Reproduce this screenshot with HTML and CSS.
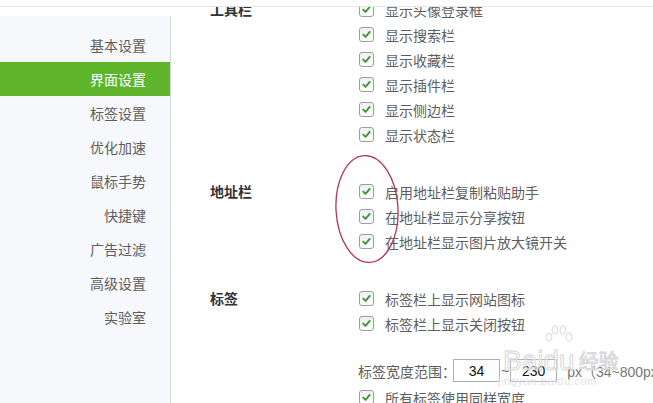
FILE: index.html
```html
<!DOCTYPE html>
<html lang="zh-CN">
<head>
<meta charset="utf-8">
<title>界面设置</title>
<link rel="stylesheet" href="styles.css">
</head>
<body>
<div class="page">
  <div class="topbar"></div>
  <div class="layout">
    <nav class="sidebar">
      <ul class="nav">
        <li class="nav-item">基本设置</li>
        <li class="nav-item active">界面设置</li>
        <li class="nav-item">标签设置</li>
        <li class="nav-item">优化加速</li>
        <li class="nav-item">鼠标手势</li>
        <li class="nav-item">快捷键</li>
        <li class="nav-item">广告过滤</li>
        <li class="nav-item">高级设置</li>
        <li class="nav-item">实验室</li>
      </ul>
    </nav>
    <main class="main">
      <div class="content">
        <section class="group">
          <h3 class="group-title">工具栏</h3>
          <div class="rows">
            <label class="row"><span class="check"><svg viewBox="0 0 15 15"><path d="M3.8 7.6 L6.4 10.2 L11.2 4.6"/></svg></span><span class="text">显示头像登录框</span></label>
            <label class="row"><span class="check"><svg viewBox="0 0 15 15"><path d="M3.8 7.6 L6.4 10.2 L11.2 4.6"/></svg></span><span class="text">显示搜索栏</span></label>
            <label class="row"><span class="check"><svg viewBox="0 0 15 15"><path d="M3.8 7.6 L6.4 10.2 L11.2 4.6"/></svg></span><span class="text">显示收藏栏</span></label>
            <label class="row"><span class="check"><svg viewBox="0 0 15 15"><path d="M3.8 7.6 L6.4 10.2 L11.2 4.6"/></svg></span><span class="text">显示插件栏</span></label>
            <label class="row"><span class="check"><svg viewBox="0 0 15 15"><path d="M3.8 7.6 L6.4 10.2 L11.2 4.6"/></svg></span><span class="text">显示侧边栏</span></label>
            <label class="row"><span class="check"><svg viewBox="0 0 15 15"><path d="M3.8 7.6 L6.4 10.2 L11.2 4.6"/></svg></span><span class="text">显示状态栏</span></label>
          </div>
        </section>
        <section class="group">
          <h3 class="group-title">地址栏</h3>
          <div class="rows">
            <label class="row"><span class="check"><svg viewBox="0 0 15 15"><path d="M3.8 7.6 L6.4 10.2 L11.2 4.6"/></svg></span><span class="text">启用地址栏复制粘贴助手</span></label>
            <label class="row"><span class="check"><svg viewBox="0 0 15 15"><path d="M3.8 7.6 L6.4 10.2 L11.2 4.6"/></svg></span><span class="text">在地址栏显示分享按钮</span></label>
            <label class="row"><span class="check"><svg viewBox="0 0 15 15"><path d="M3.8 7.6 L6.4 10.2 L11.2 4.6"/></svg></span><span class="text">在地址栏显示图片放大镜开关</span></label>
          </div>
        </section>
        <section class="group">
          <h3 class="group-title">标签</h3>
          <div class="rows">
            <label class="row"><span class="check"><svg viewBox="0 0 15 15"><path d="M3.8 7.6 L6.4 10.2 L11.2 4.6"/></svg></span><span class="text">标签栏上显示网站图标</span></label>
            <label class="row"><span class="check"><svg viewBox="0 0 15 15"><path d="M3.8 7.6 L6.4 10.2 L11.2 4.6"/></svg></span><span class="text">标签栏上显示关闭按钮</span></label>
            <div class="width-row">
              <span class="text width-label">标签宽度范围：</span>
              <input class="num" type="text" value="34" readonly>
              <span class="tilde">~</span>
              <input class="num" type="text" value="230" readonly>
              <span class="unit">px（34~800px）</span>
            </div>
            <label class="row"><span class="check"><svg viewBox="0 0 15 15"><path d="M3.8 7.6 L6.4 10.2 L11.2 4.6"/></svg></span><span class="text">所有标签使用同样宽度</span></label>
          </div>
        </section>
      </div>
    </main>
  </div>

  <svg class="circle-mark" viewBox="0 0 70 114" width="70" height="114">
    <ellipse cx="35" cy="57" rx="31" ry="53.5" transform="rotate(-3 35 57)"/>
  </svg>

  <div class="watermark">
    <div class="wm-logo">
      <span class="wm-word">Bai</span>
      <span class="wm-du">
        <svg class="wm-paw" viewBox="0 0 30 26" width="30" height="26">
          <ellipse cx="5" cy="12" rx="3" ry="4"/>
          <ellipse cx="11" cy="5" rx="3" ry="4"/>
          <ellipse cx="19" cy="5" rx="3" ry="4"/>
          <ellipse cx="25" cy="12" rx="3" ry="4"/>
        </svg>
        <span class="wm-word">du</span>
      </span>
      <span class="wm-cn">经验</span>
    </div>
    <div class="wm-url">jingyan.baidu.com</div>
  </div>
</div>
</body>
</html>
```

FILE: styles.css
```css
html, body {
  margin: 0;
  padding: 0;
  background: #ffffff;
}

body {
  font-family: "Noto Sans CJK SC", "Liberation Sans", sans-serif;
  font-size: 14px;
  color: #5e5e5e;
}

.page {
  position: relative;
  width: 653px;
  height: 403px;
  overflow: hidden;
}

.topbar {
  height: 6px;
  background: #ffffff;
  border-bottom: 1px solid #e6e6e6;
  position: relative;
  z-index: 2;
}

.layout {
  display: flex;
  height: 396px;
}

.sidebar {
  width: 170px;
  flex: none;
  background: #f6f8fb;
  border-right: 1px solid #d4d7db;
  margin-top: 9px;
}

.nav {
  list-style: none;
  margin: 0;
  padding: 12px 0 0 0;
}

.nav-item {
  height: 34px;
  line-height: 34px;
  text-align: right;
  padding-right: 24px;
  color: #5e5e5e;
  font-size: 14px;
}

.nav-item.active {
  background: #5fb62c;
  color: #ffffff;
}

.main {
  flex: 1;
  overflow: hidden;
  background: #ffffff;
}

.content {
  margin-top: -10px;
  padding-left: 39px;
}

.group {
  display: grid;
  grid-template-columns: 149px 1fr;
}

.group + .group {
  margin-top: 32px;
}

.group-title {
  margin: 0;
  font-size: 14px;
  font-weight: bold;
  line-height: 25px;
  color: #2f3338;
}

.rows {
  display: flex;
  flex-direction: column;
}

.row {
  height: 25px;
  display: flex;
  align-items: center;
  gap: 11px;
  white-space: nowrap;
}

.check {
  width: 15px;
  height: 15px;
  box-sizing: border-box;
  border: 1px solid #9a9ea3;
  border-radius: 3px;
  background: linear-gradient(#eef0f2, #ffffff);
  display: flex;
  flex: none;
}

.check svg {
  width: 13px;
  height: 13px;
}

.check path {
  fill: none;
  stroke: #3b9634;
  stroke-width: 2.2;
  stroke-linecap: round;
  stroke-linejoin: round;
}

.text {
  color: #5e5e5e;
}

.width-row {
  margin-top: 20px;
  margin-left: -1px;
  height: 29px;
  display: flex;
  align-items: center;
  white-space: nowrap;
}

.width-label {
  margin-right: -3px;
}

.num {
  width: 47px;
  height: 23px;
  box-sizing: border-box;
  border: 1px solid #aab0b8;
  padding: 0;
  margin: 0;
  text-align: center;
  font-family: "Liberation Sans", sans-serif;
  font-size: 14px;
  color: #111111;
  background: #ffffff;
  outline: none;
}

.tilde {
  font-family: "Liberation Sans", sans-serif;
  margin: 0 1px 0 1px;
  color: #666666;
}

.unit {
  margin-left: 10px;
  font-family: "Liberation Sans", "Noto Sans CJK SC", sans-serif;
  color: #777777;
}

.circle-mark {
  position: absolute;
  left: 332px;
  top: 152px;
}

.circle-mark ellipse {
  fill: none;
  stroke: #b8354e;
  stroke-width: 1.3;
}

.watermark {
  position: absolute;
  left: 503px;
  top: 334px;
  pointer-events: none;
}

.wm-logo {
  display: flex;
  align-items: flex-end;
  height: 40px;
}

.wm-word {
  font-family: "Liberation Sans", sans-serif;
  font-size: 28px;
  line-height: 27px;
  color: rgba(255, 255, 255, 0.4);
  -webkit-text-stroke: 1px #d6d6d6;
}

.wm-du {
  position: relative;
  display: flex;
  flex-direction: column;
  align-items: center;
}

.wm-paw {
  margin-bottom: -4px;
}

.wm-paw ellipse {
  fill: none;
  stroke: #dadada;
  stroke-width: 1;
}

.wm-cn {
  margin-left: 4px;
  font-size: 20px;
  line-height: 27px;
  color: rgba(255, 255, 255, 0.4);
  -webkit-text-stroke: 1px #d6d6d6;
}

.wm-url {
  margin-top: 1px;
  margin-left: -5px;
  font-family: "Liberation Sans", sans-serif;
  font-size: 11px;
  letter-spacing: 0.6px;
  color: #e2e2e2;
}
```
